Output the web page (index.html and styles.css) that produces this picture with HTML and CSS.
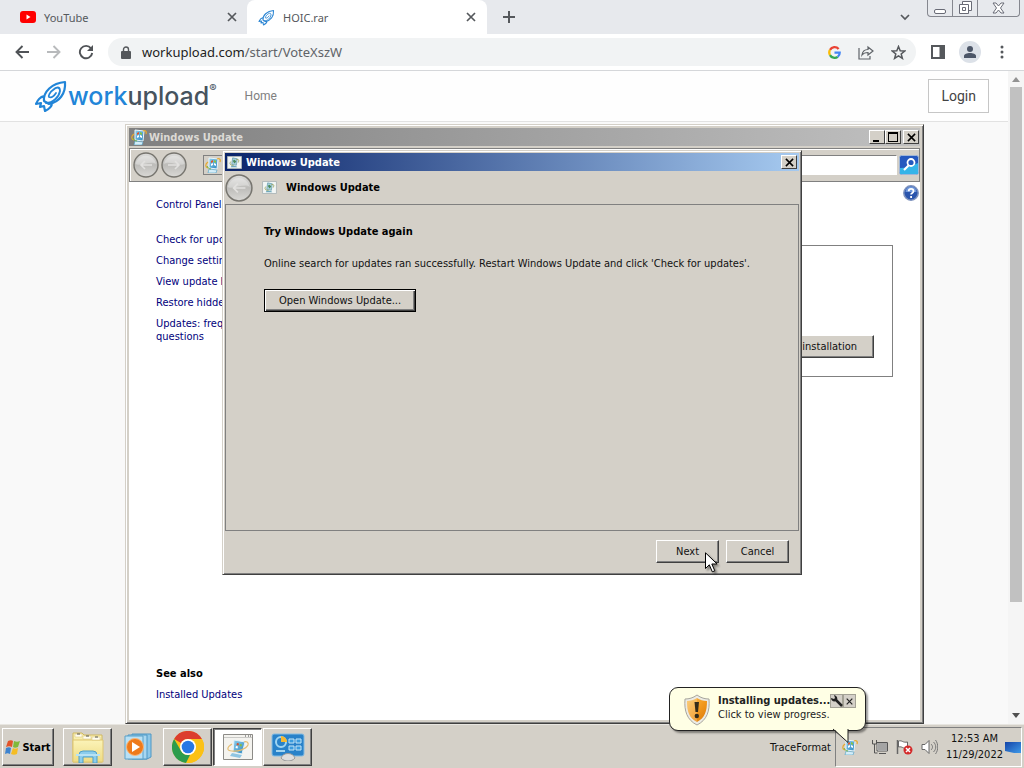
FILE: index.html
```html
<!DOCTYPE html>
<html lang="en">
<head>
<meta charset="utf-8">
<title>HOIC.rar</title>
<link rel="stylesheet" href="styles.css">
</head>
<body>
<svg class="defs" width="0" height="0" aria-hidden="true">
  <defs>
    <linearGradient id="orb" x1="0" y1="0" x2="0" y2="1"><stop offset="0" stop-color="#dededc"/><stop offset=".5" stop-color="#bdbcb9"/><stop offset="1" stop-color="#dad9d6"/></linearGradient>
    <linearGradient id="sky" x1="0" y1="0" x2="1" y2="1"><stop offset="0" stop-color="#8fd0ef"/><stop offset="1" stop-color="#2c86bd"/></linearGradient>
    <linearGradient id="paper" x1="0" y1="0" x2="0" y2="1"><stop offset="0" stop-color="#fbf3b8"/><stop offset="1" stop-color="#eedb83"/></linearGradient>
    <linearGradient id="shield" x1="0" y1="0" x2="1" y2="1"><stop offset="0" stop-color="#f9c25c"/><stop offset=".5" stop-color="#f39a1f"/><stop offset="1" stop-color="#d97808"/></linearGradient>
    <linearGradient id="screen" x1="0" y1="0" x2="1" y2="1"><stop offset="0" stop-color="#1444a8"/><stop offset="1" stop-color="#3f9ae8"/></linearGradient>
    <symbol id="update" viewBox="0 0 16 16">
      <path d="M4 1l9 1-1 10-8-1z" fill="url(#sky)" stroke="#e9f6fc"/>
      <path d="M4 12l8 1-1 3H3z" fill="#d4edf8" stroke="#4b9dc4" stroke-width=".6"/>
      <path d="M6 4l2-1v2l-2 1z" fill="#e2572b"/><path d="M9 3l2 1v2L9 5z" fill="#8cc63f"/><path d="M6 7l2-1v2l-2 1z" fill="#fff"/><path d="M9 6l2 1v2L9 8z" fill="#fff"/>
      <path d="M3 5C0 7 0 10 3 11M12 2c2-1 4 0 3 3" fill="none" stroke="#e8a92c" stroke-width="1.200"/><path d="M2 9c1 2 2 3 4 3" fill="none" stroke="#68b545"/>
    </symbol>
    <symbol id="update-page" viewBox="0 0 16 14">
      <path d="M.5.5h15v13H.5z" fill="#f2f6f5" stroke="#aeb7b8"/>
      <path d="M6 2l5 1-1 7-5-1z" fill="#a9cfda" stroke="#5c97a8" stroke-width=".7"/><path d="M5 10l5 1 1 1H4z" fill="#6fa9bd"/><path d="M6 5l2-1 2 2-2 2z" fill="#4c8b5c"/><path d="M4 6C2 9 4 10 7 10M10 4c3-1 3 1 2 3" fill="none" stroke="#9ba45f"/>
    </symbol>
    <symbol id="orb-back" viewBox="0 0 26 26">
      <circle cx="13" cy="13" r="12" fill="url(#orb)" stroke="#77756f" stroke-width="1.400"/><path d="M2.500 12C7 15 18 8 23 12A10.500 10.500 0 0 0 2.500 12z" fill="#fff" opacity=".3"/><path d="M19 13H8M12 9l-4 4 4 4" fill="none" stroke="#e2e1df" stroke-width="1.600"/>
    </symbol>
    <symbol id="rocket" viewBox="0 0 34 34">
      <path d="M10 22C9 13 18 4 31 3c1 12-6 20-16 22zM10 17c-4 1-6 3-8 8l5-1-1 4 4-1 1 5c4-2 7-4 7-8" fill="none" stroke="currentColor" stroke-width="2.200" stroke-linejoin="round"/>
      <path d="M12 24c7 0 13-6 14-12 0-5-4-4-7-1-3 2-5 6-4 7 2 1 5-1 7-4" fill="none" stroke="currentColor" stroke-width="1.800" stroke-linecap="round"/>
    </symbol>
    <symbol id="cross" viewBox="0 0 10 10"><path d="M1 1l8 8M9 1L1 9" fill="none" stroke="currentColor" stroke-width="1.700"/></symbol>
  </defs>
</svg>

<div class="screen">
  <header class="chrome">
    <div class="tabs">
      <div class="tab">
        <svg width="16" height="12" viewBox="0 0 16 12"><rect width="16" height="12" rx="3" fill="#f00"/><path d="M6.500 3.500v5l4-2.500z" fill="#fff"/></svg>
        <span class="tab-name">YouTube</span>
        <button class="plain" aria-label="Close YouTube"><svg width="10" height="10"><use href="#cross"/></svg></button>
      </div>
      <div class="tab tab-active">
        <svg class="blue" width="17" height="17"><use href="#rocket"/></svg>
        <span class="tab-name">HOIC.rar</span>
        <button class="plain" aria-label="Close HOIC.rar"><svg width="10" height="10"><use href="#cross"/></svg></button>
      </div>
      <button class="plain new-tab" aria-label="New tab"><svg width="12" height="12" viewBox="0 0 12 12"><path d="M6 0v12M0 6h12" stroke="currentColor" stroke-width="2"/></svg></button>
      <button class="plain tab-search" aria-label="Search tabs"><svg width="10" height="7" viewBox="0 0 10 7"><path d="M1 1l4 4 4-4" fill="none" stroke="currentColor" stroke-width="1.700"/></svg></button>
      <div class="caption">
        <button aria-label="Minimize"><svg width="12" height="14" viewBox="0 0 12 14"><rect x=".5" y="8.500" width="11" height="4" rx="1.500" fill="#fff" stroke="#696b76"/></svg></button>
        <button aria-label="Restore"><svg width="14" height="14" viewBox="0 0 14 14" fill="#fff" stroke="#696b76"><path d="M4.500.5h9v9h-9z"/><path d="M1.500 3.500h9v9h-9z"/><path d="M4.500 6.500h3v3h-3z"/></svg></button>
        <button class="wide" aria-label="Close"><svg width="13" height="12" viewBox="0 0 13 12"><path d="M1 1h3l2.500 3L9 1h3L8.500 6l3.500 5H9L6.500 8 4 11H1l3.500-5z" fill="#fff" stroke="#696b76"/></svg></button>
      </div>
    </div>
    <div class="toolbar">
      <button class="plain tool" aria-label="Back"><svg width="14" height="14" viewBox="0 0 14 14"><path d="M14 7H2M7.500 1l-6 6 6 6" fill="none" stroke="#505357" stroke-width="1.900"/></svg></button>
      <button class="plain tool" aria-label="Forward"><svg width="14" height="14" viewBox="0 0 14 14"><path d="M0 7h12M6.500 1l6 6-6 6" fill="none" stroke="#b8babc" stroke-width="1.900"/></svg></button>
      <button class="plain tool" aria-label="Reload"><svg width="16" height="16" viewBox="0 0 16 16"><path d="M13 4.300A6.200 6.200 0 1 0 14.200 9" fill="none" stroke="#505357" stroke-width="1.900"/><path d="M15 1v6H9z" fill="#505357"/></svg></button>
      <div class="address">
        <svg width="10" height="13" viewBox="0 0 10 13"><rect y="5" width="10" height="8" rx="1" fill="#55585c"/><path d="M2.500 5V3.500a2.500 2.500 0 0 1 5 0V5" fill="none" stroke="#55585c" stroke-width="1.400"/></svg>
        <span class="url">workupload.com<span>/start/VoteXszW</span></span>
        <button class="plain tool" aria-label="Google"><svg width="13" height="13" viewBox="0 0 13 13" fill="none" stroke-width="2.300"><path d="M10.600 3.100A5.200 5.200 0 0 0 2 3.900" stroke="#ea4335"/><path d="M2 3.900a5.200 5.200 0 0 0 0 5.200" stroke="#fbbc05"/><path d="M2 9.100a5.200 5.200 0 0 0 7.700 1.700" stroke="#34a853"/><path d="M9.700 10.800A5 5 0 0 0 11.700 6.600H6.500" stroke="#4285f4"/></svg></button>
        <button class="plain tool" aria-label="Share"><svg width="16" height="15" viewBox="0 0 16 15"><path d="M1 3v11h11v-3M4 10c.5-4 3-5.500 6-5.500V2l5 4-5 4V7.500c-3 0-4.500.5-6 2.500z" fill="none" stroke="#5f6368" stroke-width="1.200"/></svg></button>
        <button class="plain tool" aria-label="Bookmark"><svg width="15" height="15" viewBox="0 0 15 15"><path d="M7.500 1.500l1.700 4.200 4.500.3-3.500 2.900 1.200 4.500-3.900-2.500-3.900 2.500 1.200-4.500L1.300 6l4.500-.3z" fill="none" stroke="#55585c" stroke-width="1.500"/></svg></button>
      </div>
      <button class="plain tool" aria-label="Side panel"><svg width="14" height="14" viewBox="0 0 14 14"><path d="M1 1h12v12H1z" fill="none" stroke="#55585c" stroke-width="2"/><path d="M8.500 1H13v12H8.500z" fill="#55585c"/></svg></button>
      <button class="plain tool" aria-label="Profile"><svg width="22" height="22" viewBox="0 0 22 22"><circle cx="11" cy="11" r="11" fill="#dce1e8"/><circle cx="11" cy="8" r="3" fill="#4c5668"/><path d="M5 17v-2c0-4 12-4 12 0v2z" fill="#4c5668"/></svg></button>
      <button class="plain tool" aria-label="Menu"><svg width="4" height="14" viewBox="0 0 4 14" fill="#55585c"><circle cx="2" cy="2" r="1.500"/><circle cx="2" cy="7" r="1.500"/><circle cx="2" cy="12" r="1.500"/></svg></button>
    </div>
  </header>

  <main class="viewport">
    <div class="site">
      <nav class="site-head">
        <a class="logo" href="#"><svg width="34" height="34"><use href="#rocket"/></svg><span>work<b>upload</b></span><sup>®</sup></a>
        <a class="home" href="#">Home</a>
        <a class="login" href="#">Login</a>
      </nav>
    </div>
    <div class="scrollbar">
      <svg width="8" height="5" viewBox="0 0 8 5"><path d="M0 5l4-5 4 5z" fill="#929292"/></svg>
      <div class="thumb"></div>
      <svg width="8" height="5" viewBox="0 0 8 5"><path d="M0 0l4 5 4-5z" fill="#505050"/></svg>
    </div>
  </main>

  <section class="window frame" aria-label="Windows Update">
    <div class="title title-off">
      <svg width="16" height="16"><use href="#update"/></svg>
      <h2>Windows Update</h2>
      <button class="cap" aria-label="Minimize"><svg width="10" height="10"><path d="M1 8h6v2H1z"/></svg></button>
      <button class="cap" aria-label="Maximize"><svg width="10" height="10"><path d="M0 0h10v10H0zM1 2v7h8V2z" fill-rule="evenodd"/></svg></button>
      <button class="cap cap-close" aria-label="Close"><svg width="9" height="9"><use href="#cross"/></svg></button>
    </div>
    <div class="explorer-bar">
      <button class="plain" aria-label="Back"><svg width="26" height="26"><use href="#orb-back"/></svg></button>
      <button class="plain flip" aria-label="Forward"><svg width="26" height="26"><use href="#orb-back"/></svg></button>
      <div class="path"><svg width="16" height="16"><use href="#update"/></svg></div>
      <input class="search" type="text" aria-label="Search Control Panel">
      <button class="plain" aria-label="Search"><svg width="20" height="20" viewBox="0 0 20 20"><rect x=".5" y=".5" width="19" height="19" rx="2" fill="#2458bf" stroke="#9fb6d8"/><path d="M1 13c6 0 12-2 18-5v11H1z" fill="#35b4e8"/><circle cx="12" cy="7.500" r="3.500" fill="#2458bf" stroke="#fff" stroke-width="1.800"/><path d="M9.500 10.500L5 15" stroke="#fff" stroke-width="2.200"/></svg></button>
    </div>
    <div class="panel">
      <nav class="side">
        <a href="#">Control Panel Home</a>
        <ul>
          <li><a href="#">Check for updates</a></li>
          <li><a href="#">Change settings</a></li>
          <li><a href="#">View update history</a></li>
          <li><a href="#">Restore hidden updates</a></li>
          <li><a href="#">Updates: frequently asked questions</a></li>
        </ul>
        <h3>See also</h3>
        <a href="#">Installed Updates</a>
      </nav>
      <div class="body">
        <button class="plain help" aria-label="Help"><svg width="16" height="16" viewBox="0 0 16 16"><circle cx="8" cy="8" r="7.200" fill="#2a55ad" stroke="#7d92bd" stroke-width="1.500"/><path d="M2.500 7a5.500 5.500 0 0 1 11 0z" fill="#6f97da"/><path d="M5.700 6.200c0-3 4.800-3 4.800 0 0 1.800-2.400 1.600-2.400 3.300M8.100 11v2" fill="none" stroke="#fff" stroke-width="1.800"/></svg></button>
        <div class="group"><button class="btn">Stop installation</button></div>
      </div>
    </div>
  </section>

  <section class="dialog frame" role="dialog" aria-label="Windows Update">
    <div class="title title-on">
      <svg width="15" height="13"><use href="#update-page"/></svg>
      <h2>Windows Update</h2>
      <button class="cap" aria-label="Close"><svg width="9" height="9"><use href="#cross"/></svg></button>
    </div>
    <div class="wizard-head">
      <button class="plain" aria-label="Back"><svg width="28" height="28"><use href="#orb-back"/></svg></button>
      <svg width="15" height="13"><use href="#update-page"/></svg>
      <h2>Windows Update</h2>
    </div>
    <div class="wizard-page">
      <h3>Try Windows Update again</h3>
      <p>Online search for updates ran successfully. Restart Windows Update and click 'Check for updates'.</p>
      <button class="btn btn-default">Open Windows Update...</button>
    </div>
    <div class="wizard-foot">
      <button class="btn">Next</button>
      <button class="btn">Cancel</button>
      <svg class="cursor" width="13" height="21" viewBox="0 0 13 21"><path d="M.5.8v15.700l3.800-3.700 3 7 2.500-1-3-6.800h5.300z" fill="#fff" stroke="#000"/></svg>
    </div>
  </section>

  <footer class="taskbar">
    <button class="task start"><svg width="17" height="17" viewBox="0 0 17 17"><path d="M3 2c2-1 4-1 5 0L7 8C5 7 3 7 1 8z" fill="#e2532a"/><path d="M9 2c2 1 4 1 6 0l-2 6c-2 1-4 1-5 0z" fill="#80b93a"/><path d="M1 9c2-1 4-1 5 0l-1 6c-2-1-3-1-5 0z" fill="#3d83cf"/><path d="M8 9c1 1 3 1 5 0l-1 6c-2 1-4 1-6 0z" fill="#f5bd24"/></svg>Start</button>
    <div class="tasks">
      <button class="task" aria-label="Explorer"><svg width="34" height="32" viewBox="0 0 34 32"><path d="M2 2h9l2 2h18v27H2z" fill="url(#paper)" stroke="#d0b860"/><path d="M2 9h30v22H2z" fill="url(#paper)" stroke="#dfc671"/><path d="M4 3h7v3H4zM12 5h8v3h-8zM21 6h8v3h-8z" fill="#fffdf0" stroke="#d5c078" stroke-width=".5"/><path d="M6 3h3M15 5h3M24 6h3" stroke="#555"/><path d="M8 32V24q0-4 4-4h10q4 0 4 4v8h-4v-6H12v6z" fill="#8ccdec" stroke="#4d9fc9"/><path d="M5 23h24v2H5z" fill="#b7e2f4"/></svg></button>
      <button class="task task-flat" aria-label="Media Player"><svg width="28" height="28" viewBox="0 0 28 28"><path d="M8 1h19v23l-4 2H8z" fill="#8dc7e8" stroke="#4f97c4"/><path d="M4 2h19v24H4z" fill="#a9d7f0" stroke="#4f97c4"/><path d="M1 3h18v23H1z" fill="#b9e0f4" stroke="#5ba1c9"/><circle cx="11" cy="14" r="8.500" fill="#ee7a1a" stroke="#f9b577"/><path d="M8 9l8 5-8 5z" fill="#fff"/></svg></button>
      <button class="task" aria-label="Chrome"><svg width="32" height="32" viewBox="0 0 32 32"><circle cx="16" cy="16" r="16" fill="#fbc116"/><path d="M2.100 8A16 16 0 0 1 29.900 8H16a8 8 0 0 0-7 4z" fill="#dc3d2d"/><path d="M2.100 8l7 12a8 8 0 0 0 9 3.700L14 32A16 16 0 0 1 2.100 8z" fill="#2c9c4c"/><path d="M29.900 8H16a8 8 0 0 1 7 12l-7 12A16 16 0 0 0 29.900 8z" fill="#fbc116"/><circle cx="16" cy="16" r="8" fill="#fff"/><circle cx="16" cy="16" r="6.300" fill="#2878e4"/></svg></button>
      <button class="task task-down" aria-label="Windows Update"><svg width="30" height="26" viewBox="0 0 30 26"><path d="M.5.5h29v25H.5z" fill="#f4f3ef" stroke="#8c8b87"/><path d="M1 3.500h28" stroke="#c9c9c6"/><path d="M22 2h1M25 2h1M27 2h1" stroke="#444"/><path d="M11 6l11 2-3 12-9-2z" fill="url(#sky)" stroke="#e3f1f7"/><path d="M9 19l10 2-2 3-10-2z" fill="#8fc5e2"/><path d="M14 9l2 .5-.5 2-2-.5z" fill="#d5532d"/><path d="M17 10l2 .5-.5 2-2-.5z" fill="#8abc3c"/><path d="M13 12l2 .5-.5 2-2-.5z" fill="#fff"/><path d="M9 10c-5 3-6 7 0 7 6 1 14-2 16-6 1-3-2-4-4-3" fill="none" stroke="#e5bd72" stroke-width="1.200"/></svg></button>
      <button class="task" aria-label="Control Panel"><svg width="34" height="28" viewBox="0 0 34 28"><rect x="1" y="1" width="32" height="22" rx="2" fill="#2982c9" stroke="#84bce2"/><circle cx="10" cy="9" r="5" fill="none" stroke="#9fd5f2" stroke-width="2"/><path d="M10 9V3a6 6 0 0 1 6 6z" fill="#f5b933"/><path d="M18 6h5v4h-5zM25 6h5v4h-5zM18 13h5v4h-5zM25 13h5v4h-5z" fill="#3b9cde" stroke="#c5e6f7"/><path d="M5 18h9" stroke="#a3d4ef" stroke-width="2"/><path d="M10 25c2-6 12-6 14 0-3 4-11 4-14 0z" fill="#dedede" stroke="#999"/></svg></button>
    </div>
    <span class="trace">TraceFormat</span>
    <div class="tray">
      <svg width="16" height="16"><use href="#update"/></svg>
      <svg class="net" width="16" height="16" viewBox="0 0 16 16"><path d="M5.500 3.500h10v8h-10z" fill="#a4a4a4" stroke="#fff"/><path d="M5 3.500h10.500v8.500H5zM7 14.500h7" fill="none" stroke="#555"/><path d="M.5 1v4h4V1M2.500 5v9h3" fill="none" stroke="#555"/></svg>
      <svg width="17" height="16" viewBox="0 0 17 16"><path d="M1.500 1v14" stroke="#666" stroke-width="1.500"/><path d="M2.500 2c4-1 4 2 9 1v6c-5 1-5-2-9-1z" fill="#fff" stroke="#666"/><circle cx="12" cy="11" r="4.500" fill="#d42a2a"/><path d="M10 9l4 4M14 9l-4 4" stroke="#fff" stroke-width="1.500"/></svg>
      <svg width="17" height="16" viewBox="0 0 17 16"><path d="M1 5.500h3L8 1.500v13l-4-4H1z" fill="#fff" stroke="#666"/><path d="M10 5c2 2 2 4 0 6M12.500 3c3 3 3 7 0 10M14.500 1c3 4 3 10 0 14" fill="none" stroke="#777"/></svg>
      <time class="clock">12:53 AM<br>11/29/2022</time>
      <svg width="16" height="13" viewBox="0 0 16 13"><path d="M0 1h16v11H9L0 10z" fill="url(#screen)"/></svg>
    </div>
  </footer>

  <aside class="balloon">
    <svg width="28" height="32" viewBox="0 0 28 32"><path d="M14 1c4 3 8 4 12 4 1 12-2 21-12 26C4 26 1 17 2 5c4 0 8-1 12-4z" fill="#ecebe5" stroke="#a8a69d"/><path d="M14 4c3 2 6 3 10 3 0 10-2 17-10 21C6 24 4 17 4 7c4 0 7-1 10-3z" fill="url(#shield)"/><path d="M14 4v24C6 24 4 17 4 7c4 0 7-1 10-3z" fill="#fff" opacity=".2"/><path d="M11.500 8h4.500l-1 10h-2.500z" fill="#332b1a"/><circle cx="13.800" cy="22" r="2.200" fill="#332b1a"/></svg>
    <div class="note"><strong>Installing updates...</strong><span>Click to view progress.</span></div>
    <button class="mini" aria-label="Customize"><svg width="12" height="12" viewBox="0 0 12 12"><path d="M4.500 4.500L11 11" stroke="#222" stroke-width="2.500"/><path d="M3 0l1 3-1 1-3-1c0 3 3 4 5 3s2-5-2-6z" fill="#222"/></svg></button>
    <button class="mini" aria-label="Close"><svg width="7" height="7"><use href="#cross"/></svg></button>
    <svg class="tail" width="20" height="16" viewBox="0 0 20 16"><path d="M1 0l15 14V0z" fill="#ffffe5"/><path d="M1 1l15 13.500V1" fill="none" stroke="#222"/></svg>
  </aside>
</div>
</body>
</html>
```

FILE: styles.css
```css
* { box-sizing: border-box; }

body {
  margin: 0;
  font: 11px/13px Tahoma, "DejaVu Sans Condensed", "DejaVu Sans", sans-serif;
  color: #111;
}

h2, h3, p, ul { margin: 0; padding: 0; font-size: 11px; }
ul { list-style: none; }
button, input { font: inherit; color: inherit; }
svg { display: block; flex: none; }
a { text-decoration: none; color: inherit; }
.defs { position: absolute; }

.screen {
  position: relative;
  display: flex;
  flex-direction: column;
  height: 100vh;
  overflow: hidden;
}

.plain {
  display: flex;
  align-items: center;
  justify-content: center;
  flex: none;
  padding: 0;
  border: 0;
  background: none;
}

/* Browser */
.chrome {
  background: #e7e9ed;
  border-bottom: 1px solid #d5d7da;
  color: #55585c;
  font-family: "Noto Sans", sans-serif;
}
.tabs { display: flex; align-items: center; height: 34px; }
.tab {
  display: flex;
  align-items: center;
  gap: 8px;
  flex: 0 1 247px;
  height: 34px;
  padding: 0 10px 0 20px;
  font-size: 11px;
}
.tab-active { flex-basis: 240px; padding: 0 11px; background: #fff; border-radius: 8px 8px 0 0; }
.tab-name { flex: 1; }
.blue { color: #2d86d3; }
.new-tab { width: 44px; }
.tab-search { margin: 0 17px 0 auto; }
.caption {
  display: flex;
  align-self: flex-start;
  height: 17px;
  margin-right: 4px;
  border: 1px solid #85878f;
  border-top: 0;
  border-radius: 0 0 4px 4px;
}
.caption button {
  display: flex;
  align-items: center;
  justify-content: center;
  width: 25px;
  padding: 0;
  border: 0;
  border-right: 1px solid #85878f;
  background: none;
}
.caption .wide { width: 41px; border-right: 0; }

.toolbar { display: flex; align-items: center; height: 36px; padding: 0 6px; background: #fff; }
.tool { width: 32px; height: 28px; }
.address {
  display: flex;
  align-items: center;
  flex: 1;
  height: 28px;
  margin: 0 6px;
  padding: 0 2px 0 13px;
  border-radius: 14px;
  background: #f1f3f4;
}
.url { flex: 1; padding-left: 11px; font-size: 13px; line-height: 20px; color: #222; }
.url span { color: #606368; }

/* Site */
.viewport { display: flex; flex: 1; min-height: 0; background: #f9f9f9; }
.site { flex: 1; }
.site-head {
  display: flex;
  align-items: center;
  height: 51px;
  padding: 0 19px 0 34px;
  border-bottom: 1px solid #e2e2e2;
  background: #fefefe;
  font-family: Roboto, sans-serif;
}
.logo { display: flex; align-items: center; color: #2185d8; font: 25px/34px Inter, sans-serif; font-weight: 500; }
.logo b { color: #46535e; font-weight: 500; }
.logo sup { align-self: flex-start; font-size: 11px; line-height: 18px; color: #46535e; }
.home { margin-left: 28px; font-size: 12px; color: #808080; }
.login {
  margin-left: auto;
  padding: 7px 12px;
  border: 1px solid #c6c6c6;
  background: #fff;
  font-size: 14px;
  line-height: 18px;
  color: #444;
}
.scrollbar { display: flex; flex-direction: column; align-items: center; width: 16px; padding: 6px 0; background: #f5f5f5; }
.thumb { width: 12px; height: 515px; margin: 5px 0 auto; background: #c1c1c1; }

/* Classic windows */
.frame {
  position: absolute;
  display: flex;
  flex-direction: column;
  background: #d4d0c8;
  border: 1px solid;
  border-color: #d4d0c8 #404040 #404040 #d4d0c8;
  box-shadow: inset 1px 1px #fff, inset -1px -1px #808080;
}
.window { left: 125px; right: 100px; top: 124px; bottom: 44px; padding: 3px; }
.dialog { left: 222px; top: 150px; width: 580px; padding: 2px; }

.title { display: flex; align-items: center; gap: 4px; height: 18px; padding: 0 2px; }
.title h2 { flex: 1; }
.title-off { gap: 0; padding: 0 1px 0 2px; background: linear-gradient(90deg, #808080, #c0c0c0); color: #dcdad5; }
.title-off h2 { padding-left: 2px; }
.title-on { background: linear-gradient(90deg, #0a246a, #a6caf0); color: #fff; }
.cap {
  display: flex;
  align-items: center;
  justify-content: center;
  width: 16px;
  height: 14px;
  padding: 0;
  color: #000;
  background: #d4d0c8;
  border: 1px solid;
  border-color: #fff #404040 #404040 #fff;
}
.cap-close { margin-left: 2px; }

.explorer-bar {
  display: flex;
  align-items: center;
  height: 34px;
  margin-top: 2px;
  padding: 0 0 0 3px;
  gap: 2px;
  border: 1px solid #808080;
  box-shadow: inset 1px 1px #fff;
}
.flip { transform: scaleX(-1); }
.path { margin-left: 14px; padding: 1px; border: 1px solid #808080; }
.search { width: 200px; height: 20px; margin-left: auto; border: 1px solid; border-color: #808080 #fff #fff #808080; background: #fff; }

.panel { display: flex; flex: 1; min-height: 0; background: #fff; }
.side { display: flex; flex-direction: column; width: 170px; padding: 16px 0 19px 27px; color: #00007c; }
.side ul { display: flex; flex-direction: column; gap: 8px; padding-top: 22px; }
.side h3 { margin: auto 0 8px; color: #000; }
.body { flex: 1; padding: 3px 1px 0 0; }
.help { margin-left: auto; }
.group {
  display: flex;
  align-items: flex-end;
  justify-content: flex-end;
  height: 132px;
  margin: 44px 26px 0 10px;
  padding: 18px;
  border: 1px solid #808080;
}

.btn {
  min-width: 63px;
  height: 23px;
  padding: 0 16px;
  background: #d4d0c8;
  border: 1px solid;
  border-color: #fff #404040 #404040 #fff;
  box-shadow: inset -1px -1px #808080;
  color: #111;
}
.btn-default { padding: 0 14px; border-color: #000; box-shadow: inset 1px 1px #fff, inset -1px -1px #404040, inset -2px -2px #808080; }

.wizard-head { display: flex; align-items: center; gap: 9px; height: 33px; color: #000; }
.wizard-page { min-height: 327px; padding: 20px 38px; border: 1px solid #808080; }
.wizard-page h3 { color: #000; }
.wizard-page p { margin: 19px 0; white-space: nowrap; }
.wizard-foot { position: relative; display: flex; justify-content: flex-end; gap: 7px; padding: 9px 10px; }
.wizard-foot .btn { padding: 0; }
.cursor { position: absolute; right: 81px; top: 21px; filter: drop-shadow(2px 2px 1px #0006); }

/* Taskbar */
.taskbar {
  display: flex;
  align-items: center;
  height: 44px;
  padding: 2px 2px 1px;
  border-top: 1px solid #e8e6e1;
  background: #d4d0c8;
}
.task {
  display: flex;
  align-items: center;
  justify-content: center;
  width: 49px;
  height: 38px;
  padding: 0;
  background: #d4d0c8;
  border: 1px solid;
  border-color: #fff #404040 #404040 #fff;
  box-shadow: inset -1px -1px #808080;
}
.start { width: 52px; font-weight: bold; color: #000; }
.tasks { display: flex; gap: 1px; margin-left: 9px; }
.task-flat { border-color: transparent; box-shadow: none; background: none; }
.task-down { border-color: #404040 #fff #fff #404040; box-shadow: inset 1px 1px #808080; background: #fff; }
.trace { margin-left: auto; padding-right: 4px; }
.tray {
  display: flex;
  align-items: center;
  gap: 8px;
  height: 40px;
  padding: 0 0 0 6px;
  border: 1px solid;
  border-color: #808080 #fff #fff #808080;
}
.net { margin-left: 6px; }
.clock { line-height: 16px; text-align: center; }
.tray .clock + svg { margin-left: -6px; }

.balloon {
  position: absolute;
  right: 158px;
  bottom: 37px;
  display: flex;
  align-items: flex-start;
  width: 197px;
  padding: 6px 9px 4px 13px;
  border: 1px solid #222;
  border-radius: 9px;
  background: #ffffe5;
  box-shadow: 2px 2px 2px #0006;
  color: #222;
}
.note { display: flex; flex-direction: column; flex: 1; gap: 1px; padding-left: 7px; white-space: nowrap; }
.mini {
  display: flex;
  align-items: center;
  justify-content: center;
  width: 13px;
  height: 14px;
  padding: 0;
  border: 1px solid #a3a195;
  background: #d4d0c8;
}
.tail { position: absolute; right: 13px; top: 40px; }
```
